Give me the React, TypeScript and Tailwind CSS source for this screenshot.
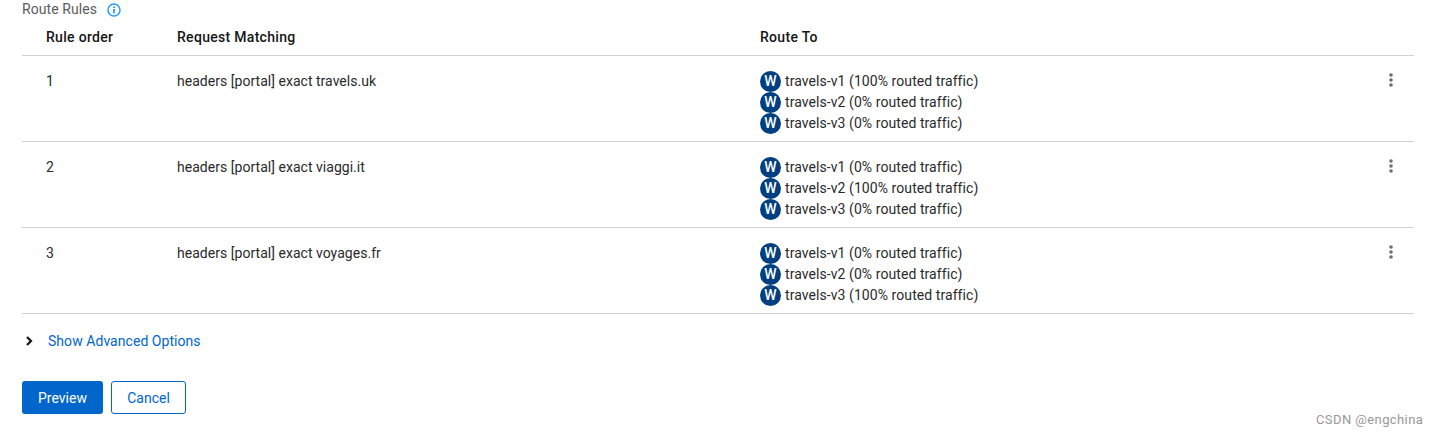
const font = "[font-family:Roboto,sans-serif]";

const rules = [
  {
    order: 1,
    match: "headers [portal] exact travels.uk",
    routes: ["travels-v1 (100% routed traffic)", "travels-v2 (0% routed traffic)", "travels-v3 (0% routed traffic)"],
  },
  {
    order: 2,
    match: "headers [portal] exact viaggi.it",
    routes: ["travels-v1 (0% routed traffic)", "travels-v2 (100% routed traffic)", "travels-v3 (0% routed traffic)"],
  },
  {
    order: 3,
    match: "headers [portal] exact voyages.fr",
    routes: ["travels-v1 (0% routed traffic)", "travels-v2 (0% routed traffic)", "travels-v3 (100% routed traffic)"],
  },
];

const InfoIcon = () => (
  <svg width="14" height="14" viewBox="0 0 14 14" fill="none">
    <circle cx="7" cy="7" r="6" stroke="#2b9af3" strokeWidth="1.5" />
    <rect x="6.1" y="6" width="1.8" height="4.4" fill="#2b9af3" />
    <rect x="6.1" y="3.3" width="1.8" height="1.8" fill="#2b9af3" />
  </svg>
);

const Kebab = () => (
  <svg width="4" height="14" viewBox="0 0 4 14" fill="#6a6e73">
    <circle cx="2" cy="2" r="1.8" />
    <circle cx="2" cy="7" r="1.8" />
    <circle cx="2" cy="12" r="1.8" />
  </svg>
);

const Route = ({ text }: { text: string }) => (
  <div className="flex h-[21px] items-center">
    <span className="flex h-[21px] w-[21px] items-center justify-center rounded-full bg-[#004080] text-[14px] font-medium text-white">
      W
    </span>
    <span className="ml-[4px] text-[14px] tracking-[0.07px] text-[#2a2a2a]">{text}</span>
  </div>
);

export default function App() {
  return (
    <div className={`relative h-[437px] w-[1438px] overflow-hidden bg-white ${font}`}>
      <div className="pl-[22px] pr-[24px]">
        <div className="flex h-[19px] items-center text-[14px] tracking-[0.07px] text-[#5a5d60]">
          <span>Route Rules</span>
          <span className="ml-[10px] flex">
            <InfoIcon />
          </span>
        </div>
        <div className="flex h-[37px] items-center border-b border-[#d2d2d2] text-[14px] font-medium tracking-[0.3px] text-[#151515]">
          <div className="w-[155px] pl-[24px]">Rule order</div>
          <div className="w-[583px]">Request Matching</div>
          <div>Route To</div>
        </div>
        {rules.map((rule) => (
          <div key={rule.order} className="flex h-[86px] border-b border-[#d2d2d2] text-[14px] text-[#2a2a2a]">
            <div className="w-[155px] pl-[24px] pt-[15px]">{rule.order}</div>
            <div className="w-[583px] pt-[15px] tracking-[0.03px]">{rule.match}</div>
            <div className="flex-1 pt-[15px]">
              {rule.routes.map((r) => (
                <Route key={r} text={r} />
              ))}
            </div>
            <div className="mr-[21px] pt-[17px]">
              <Kebab />
            </div>
          </div>
        ))}
        <div className="mt-[17px] flex h-[20px] items-center">
          <svg width="9" height="10" viewBox="0 0 9 10" className="ml-[3px]" fill="none">
            <path d="M2 1l4 4-4 4" stroke="#151515" strokeWidth="2.2" />
          </svg>
          <span className="ml-[14px] text-[14px] tracking-[0.05px] text-[#0066cc]">Show Advanced Options</span>
        </div>
        <div className="mt-[30px] flex gap-[8px]">
          <button className="h-[33px] w-[81px] rounded-[3px] bg-[#0066cc] pt-[2px] text-[14px] text-white">
            Preview
          </button>
          <button className="h-[33px] w-[75px] rounded-[3px] border border-[#0066cc] pt-[2px] text-[14px] text-[#0066cc]">
            Cancel
          </button>
        </div>
      </div>
      <div className="absolute left-[1316px] top-[410px] text-[13px] tracking-[0.4px] text-[#999999]">CSDN @engchina</div>
    </div>
  );
}
